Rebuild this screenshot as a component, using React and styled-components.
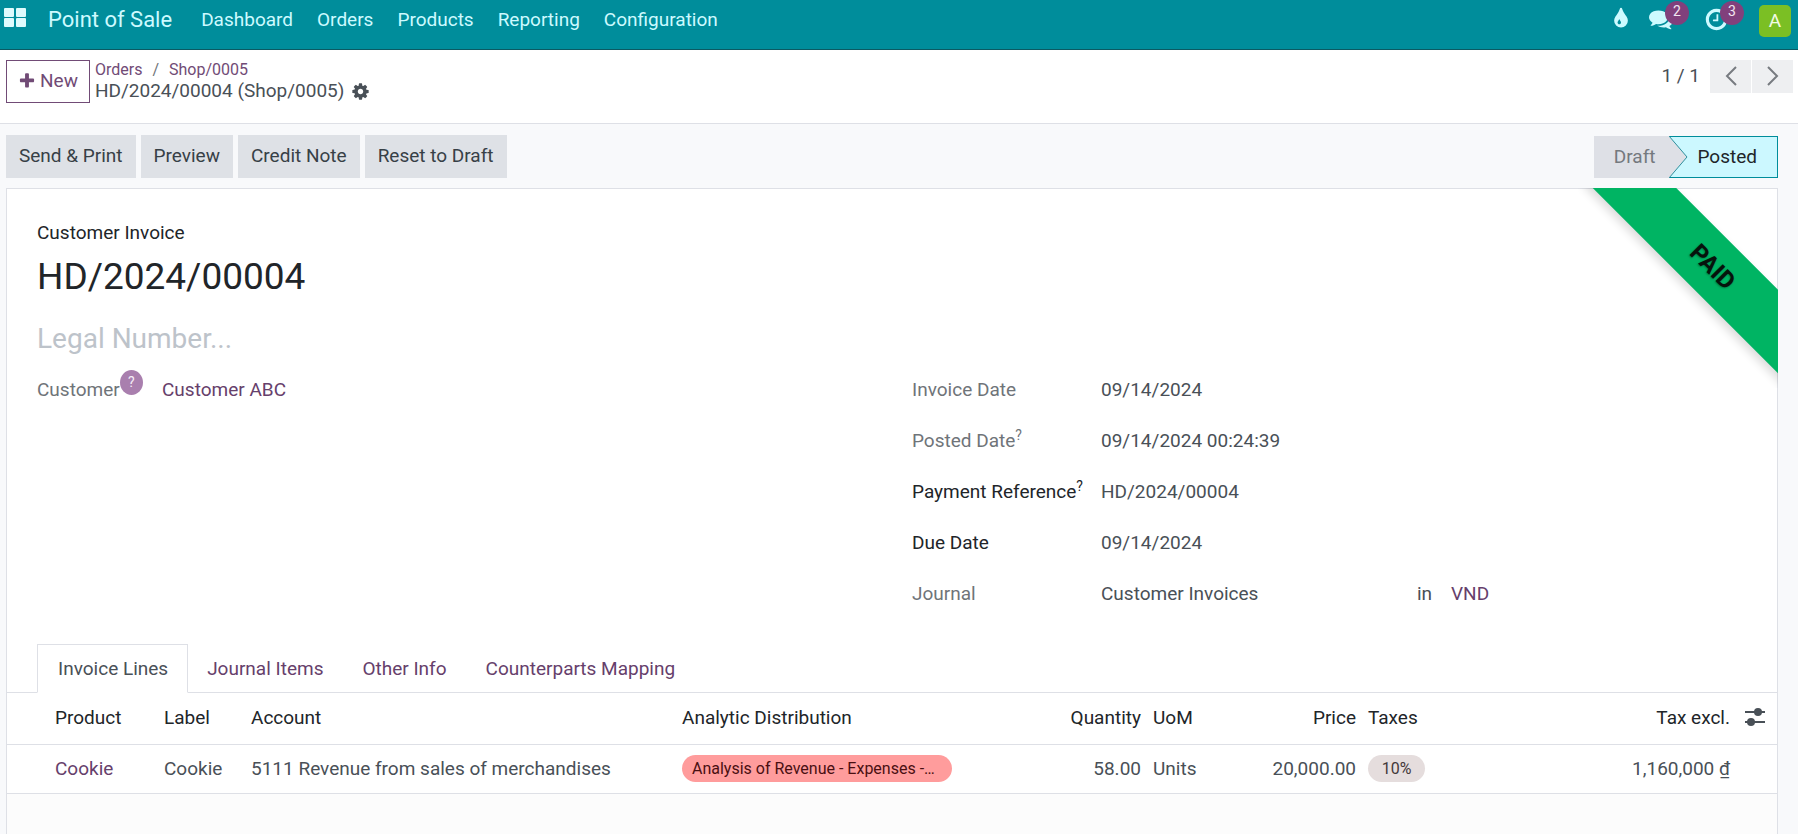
import React from "react";
import styled, { createGlobalStyle } from "styled-components";

const color = {
  teal: "#008d9b",
  tealDark: "#0b5a63",
  navText: "#cdfaff",
  plum: "#714b76",
  plumDark: "#66406b",
  line: "#dee0e6",
  text: "#495057",
  dark: "#212529",
  muted: "#6f7479",
};

const GlobalStyle = createGlobalStyle`
  *, *::before, *::after { box-sizing: border-box; }
  body {
    margin: 0;
    background: #f8f9fb;
    color: ${color.text};
    font-family: Roboto, "Liberation Sans", sans-serif;
    font-size: 19px;
    line-height: 27px;
  }
  html, body, #root { min-height: 100vh; }
  #root { display: flex; }
  button, input { font: inherit; color: inherit; }
  a { color: inherit; text-decoration: none; }
`;

const Page = styled.div`
  display: flex;
  flex-direction: column;
  flex: 1;
  min-width: 0;
`;

const NavBar = styled.header`
  display: flex;
  justify-content: space-between;
  height: 50px;
  padding: 0 7px 0 4px;
  background: ${color.teal};
  border-bottom: 1px solid ${color.tealDark};
  color: ${color.navText};
`;

const Menu = styled.nav`
  display: flex;
  align-items: center;
  gap: 24px;
  height: 39px;
`;

const AppsButton = styled.button`
  display: flex;
  padding: 0;
  margin: 0 -2px 4px 0;
  border: 0;
  background: none;
`;

const Brand = styled.a`
  margin-right: 5px;
  font-size: 22px;
`;

const MenuLink = styled.a``;

const Systray = styled.div`
  display: flex;
  align-items: center;
  height: 40px;
`;

const TrayButton = styled.button`
  position: relative;
  display: flex;
  padding: 0 0 2px;
  margin-right: ${(p) => p.$gap}px;
  border: 0;
  background: none;
`;

const Counter = styled.span`
  position: absolute;
  top: -6px;
  left: 16px;
  width: 24px;
  height: 24px;
  border-radius: 12px;
  background: #81407c;
  color: #f1e6f1;
  font-size: 14px;
  line-height: 20px;
  text-align: center;
`;

const Avatar = styled.button`
  width: 32px;
  height: 32px;
  padding: 0;
  margin-top: 2px;
  border: 0;
  border-radius: 5px;
  background: #7bbf24;
  color: #f2fbe6;
  line-height: 32px;
`;

const ControlPanel = styled.div`
  display: flex;
  justify-content: space-between;
  align-items: flex-start;
  height: 74px;
  padding: 10px 5px 0 6px;
  background: #fff;
  border-bottom: 1px solid ${color.line};
`;

const Cluster = styled.div`
  display: flex;
  align-items: ${(p) => p.$align || "center"};
  gap: ${(p) => p.$gap}px;
`;

const NewButton = styled.button`
  display: flex;
  align-items: center;
  gap: 4px;
  height: 43px;
  padding: 0 11px 2px;
  border: 1px solid ${color.plum};
  background: #fff;
  color: ${color.plum};
`;

const Crumbs = styled.nav`
  display: flex;
  gap: 10px;
  color: ${color.plum};
  font-size: 16px;
  line-height: 20px;
`;

const Slash = styled.span`
  color: #6f7479;
`;

const Current = styled.div`
  display: flex;
  align-items: center;
  gap: 7px;
  line-height: 22px;
`;

const IconButton = styled.button`
  display: inline-flex;
  padding: 0;
  border: 0;
  background: none;
  vertical-align: middle;
`;

const PageCount = styled.span`
  padding-bottom: 2px;
`;

const PageButtons = styled.div`
  display: flex;
  gap: 1px;
`;

const PageButton = styled.button`
  display: flex;
  align-items: center;
  justify-content: center;
  width: 41px;
  height: 33px;
  padding: 0 0 2px;
  border: 0;
  background: #eeeff1;
`;

const StatusRow = styled.div`
  display: flex;
  justify-content: space-between;
  padding: 11px 20px 10px 6px;
`;

const ActionButton = styled.button`
  height: 43px;
  padding: 0 13px 2px;
  border: 0;
  background: #dee1e6;
  color: #374046;
`;

const StatusBar = styled.div`
  display: flex;
  height: 42px;
  margin-top: 1px;
`;

const Stage = styled.button`
  position: relative;
  padding: ${(p) => (p.$active ? "0 20px 2px 28px" : "0 14px 2px 20px")};
  border: solid ${color.teal};
  border-width: ${(p) => (p.$active ? "1px 1px 1px 0" : "0")};
  background: ${(p) => (p.$active ? "#ccf8ff" : "#dee0e6")};
  color: ${(p) => (p.$active ? color.dark : "#74797e")};
`;

const StageTip = styled.svg`
  position: absolute;
  top: -1px;
  left: 0;
`;

const Sheet = styled.main`
  position: relative;
  flex: 1;
  margin: 0 20px 0 6px;
  border: 1px solid ${color.line};
  border-bottom: 0;
  background: #fff;
  display: flex;
  flex-direction: column;
`;

const RibbonClip = styled.div`
  position: absolute;
  top: -1px;
  right: -1px;
  width: 200px;
  height: 200px;
  overflow: hidden;
`;

const Ribbon = styled.div`
  position: absolute;
  top: 49px;
  right: -85px;
  width: 300px;
  height: 59px;
  transform: rotate(45deg);
  background: #00b463;
  box-shadow: 0 5px 10px rgba(0, 0, 0, 0.14);
  color: #06130c;
  font-size: 24px;
  font-weight: 700;
  line-height: 60px;
  text-align: center;
  text-shadow: 0 1px 2px rgba(0, 0, 0, 0.35);
`;

const SheetBody = styled.div`
  padding: 30px 30px 0;
`;

const DocType = styled.div`
  color: ${color.dark};
`;

const DocNumber = styled.h1`
  margin: 9px 0 0;
  color: ${color.dark};
  font-size: 37px;
  font-weight: 400;
  line-height: 44px;
`;

const LegalInput = styled.input`
  display: block;
  width: 400px;
  height: 36px;
  margin: 21px 0 13px;
  padding: 0;
  border: 0;
  background: none;
  font-size: 28px;
  &::placeholder { color: #bdc3ca; opacity: 1; }
`;

const Groups = styled.div`
  display: grid;
  grid-template-columns: 1fr 1fr;
  gap: 40px;
`;

const Fields = styled.dl`
  display: grid;
  grid-template-columns: ${(p) => p.$label}px 1fr;
  grid-auto-rows: 27px;
  row-gap: 24px;
  align-content: start;
  margin: 7px 0 0;
`;

const FieldLabel = styled.dt`
  position: relative;
  display: flex;
  color: ${(p) => (p.$strong ? color.dark : color.muted)};
`;

const FieldValue = styled.dd`
  display: flex;
  margin: 0;
`;

const Hint = styled.sup`
  font-size: 14px;
  line-height: 16px;
`;

const HelpDot = styled.button`
  width: 23px;
  height: 25px;
  margin-top: -6px;
  padding: 0;
  border: 0;
  border-radius: 50%;
  background: #a97fae;
  color: #f6eef7;
  font-size: 14px;
  line-height: 25px;
`;

const PlumLink = styled.a`
  color: ${color.plumDark};
`;

const JournalName = styled.span`
  width: 316px;
`;

const InWord = styled.span`
  width: 34px;
`;

const Tabs = styled.div`
  display: flex;
  margin-top: 37px;
  padding-left: 30px;
  border-bottom: 1px solid ${color.line};
`;

const Tab = styled.button`
  height: 49px;
  margin-bottom: -1px;
  padding: ${(p) => (p.$active ? "0 19px 0 20px" : "0 19px 0 18px")};
  border: 1px solid ${(p) => (p.$active ? color.line : "transparent")};
  border-bottom-color: ${(p) => (p.$active ? "#fff" : "transparent")};
  background: ${(p) => (p.$active ? "#fff" : "none")};
  color: ${(p) => (p.$active ? color.text : color.plumDark)};
`;

const Lines = styled.table`
  width: 100%;
  table-layout: fixed;
  border-collapse: separate;
  border-spacing: 0;
`;

const Col = styled.col`
  width: ${(p) => (p.$w ? `${p.$w}px` : "auto")};
`;

const HeadCell = styled.th`
  height: 52px;
  padding: 0 6px 2px;
  border-bottom: 1px solid ${color.line};
  color: ${color.dark};
  font-weight: 400;
  text-align: ${(p) => (p.$right ? "right" : "left")};
  white-space: nowrap;
  &:first-child { padding-left: 48px; }
  &:last-child { padding: 0 0 5px 9px; }
`;

const Cell = styled.td`
  height: 49px;
  padding: 0 6px 1px;
  border-bottom: 1px solid ${color.line};
  text-align: ${(p) => (p.$right ? "right" : "left")};
  white-space: nowrap;
  &:first-child { padding-left: 48px; }
`;

const Tag = styled.span`
  display: block;
  width: ${(p) => p.$w}px;
  height: 27px;
  border-radius: 14px;
  padding: 0 10px;
  background: ${(p) => (p.$red ? "#ff9c9c" : "#e5dddd")};
  color: ${(p) => (p.$red ? "#4a0f12" : "#43383a")};
  font-size: 16px;
  text-align: ${(p) => (p.$red ? "left" : "center")};
`;

const SheetRest = styled.div`
  flex: 1;
  min-height: 40px;
  background: #fcfcfc;
`;

const glyphs = {
  plus: "M1600 736v192q0 40-28 68t-68 28h-416v416q0 40-28 68t-68 28h-192q-40 0-68-28t-28-68v-416h-416q-40 0-68-28t-28-68v-192q0-40 28-68t68-28h416v-416q0-40 28-68t68-28h192q40 0 68 28t28 68v416h416q40 0 68 28t28 68z",
  cog: "M1152 896q0-106-75-181t-181-75-181 75-75 181 75 181 181 75 181-75 75-181zm512-109v222q0 12-8 23t-20 13l-185 28q-19 54-39 91 35 50 107 138 10 12 10 25t-9 23q-27 37-99 108t-94 71q-12 0-26-9l-138-108q-44 23-91 38-16 136-29 186-7 28-36 28h-222q-14 0-24.5-8.5t-11.5-21.5l-28-184q-49-16-90-37l-141 107q-10 9-25 9-14 0-25-11-126-114-165-168-7-10-7-23 0-12 8-23 15-21 51-66.5t54-70.5q-27-50-41-99l-183-27q-13-2-21-12.5t-8-23.5v-222q0-12 8-23t19-13l186-28q14-46 39-92-40-57-107-138-10-12-10-24 0-10 9-23 26-36 98.5-107.5t94.5-71.5q13 0 26 10l138 107q44-23 91-38 16-136 29-186 7-28 36-28h222q14 0 24.5 8.5t11.5 21.5l28 184q49 16 90 37l142-107q9-9 24-9 13 0 25 10 129 119 165 170 7 8 7 22 0 12-8 23-15 21-51 66.5t-54 70.5q26 50 41 98l183 28q13 2 21 12.5t8 23.5z",
  tint: "M896 1152q0-36-20-69-1-1-15.5-22.5t-25.5-38-25-44-21-50.5q-4-16-21-16t-21 16q-7 23-21 50.5t-25 44-25.5 38-15.5 22.5q-20 33-20 69 0 53 37.5 90.5t90.5 37.5 90.5-37.5 37.5-90.5zm512-128q0 212-150 362t-362 150-362-150-150-362q0-145 81-275 6-9 62.5-90.5t101-151 99.5-178 83-201.5q9-30 34-47t51-17 51.5 17 33.5 47q28 93 83 201.5t99.5 178 101 151 62.5 90.5q81 127 81 275z",
  comments: "M1408 768q0 139-94 257t-256.5 186.5-353.5 68.5q-86 0-176-16-124 88-278 128-36 9-86 16h-3q-11 0-20.5-8t-11.5-21q-1-3-1-6.5t.5-6.5 2-6l2.5-5 3.5-5.5 4-5 4.5-5 4-4.5q5-6 23-25t26-29.5 22.5-29 25-38.5 20.5-44q-124-72-195-177t-71-224q0-139 94-257t256.5-186.5 353.5-68.5 353.5 68.5 256.5 186.5 94 257zm384 256q0 120-71 224.5t-195 176.5q10 24 20.5 44t25 38.5 22.5 29 26 29.5 23 25q1 1 4 4.5t4.5 5 4 5 3.5 5.5l2.5 5 2 6 .5 6.5-1 6.5q-3 14-13 22t-22 7q-50-7-86-16-154-40-278-128-90 16-176 16-271 0-472-132 58 4 88 4 161 0 309-45t264-129q125-92 192-212t67-254q0-77-23-152 129 71 204 178t75 230z",
  clock: "M1024 544v448q0 14-9 23t-23 9h-320q-14 0-23-9t-9-23v-64q0-14 9-23t23-9h224v-352q0-14 9-23t23-9h64q14 0 23 9t9 23zm416 352q0-148-73-273t-198-198-273-73-273 73-198 198-73 273 73 273 198 198 273 73 273-73 198-198 73-273zm224 0q0 209-103 385.5t-279.5 279.5-385.5 103-385.5-103-279.5-279.5-103-385.5 103-385.5 279.5-279.5 385.5-103 385.5 103 279.5 279.5 103 385.5z",
};

const Glyph = ({ name, size, fill = "currentColor" }) => (
  <svg width={size} height={size} viewBox="0 0 1792 1792" fill={fill} aria-hidden="true">
    <path d={glyphs[name]} />
  </svg>
);

const AppsIcon = () => (
  <svg width="22" height="19" viewBox="0 0 22 19" fill="#dffbfd" aria-hidden="true">
    <rect x="0" y="0" width="10" height="9" rx="1" />
    <rect x="12" y="0" width="10" height="9" rx="1" />
    <rect x="0" y="10" width="10" height="9" rx="1" />
    <rect x="12" y="10" width="10" height="9" rx="1" />
  </svg>
);

const Chevron = ({ d }) => (
  <svg width="12" height="20" viewBox="0 0 12 20" fill="none" stroke="#777b80" strokeWidth="2" aria-hidden="true">
    <path d={d} />
  </svg>
);

const SlidersIcon = () => (
  <svg width="20" height="18" viewBox="0 0 20 18" fill={color.text} aria-hidden="true">
    <rect x="0" y="3" width="20" height="2" />
    <circle cx="13" cy="4" r="4" />
    <rect x="0" y="13" width="20" height="2" />
    <circle cx="6" cy="14" r="4" />
  </svg>
);

const menu = ["Dashboard", "Orders", "Products", "Reporting", "Configuration"];
const actions = ["Send & Print", "Preview", "Credit Note", "Reset to Draft"];
const tabs = ["Invoice Lines", "Journal Items", "Other Info", "Counterparts Mapping"];

const fields = [
  { label: "Invoice Date", value: "09/14/2024" },
  { label: "Posted Date", hint: true, value: "09/14/2024 00:24:39" },
  { label: "Payment Reference", hint: true, strong: true, value: "HD/2024/00004" },
  { label: "Due Date", strong: true, value: "09/14/2024" },
];

const columns = [
  { name: "Product", width: 151 },
  { name: "Label", width: 87 },
  { name: "Account" },
  { name: "Analytic Distribution", width: 325 },
  { name: "Quantity", width: 146, right: true },
  { name: "UoM", width: 100 },
  { name: "Price", width: 115, right: true },
  { name: "Taxes", width: 140 },
  { name: "Tax excl.", width: 234, right: true },
];

export default function App() {
  return (
    <>
      <GlobalStyle />
      <Page>
        <NavBar>
          <Menu>
            <AppsButton aria-label="Apps"><AppsIcon /></AppsButton>
            <Brand href="#">Point of Sale</Brand>
            {menu.map((m) => <MenuLink key={m} href="#">{m}</MenuLink>)}
          </Menu>
          <Systray>
            <TrayButton $gap={16} aria-label="Theme"><Glyph name="tint" size={24} /></TrayButton>
            <TrayButton $gap={31} aria-label="Messages">
              <Glyph name="comments" size={24} /><Counter>2</Counter>
            </TrayButton>
            <TrayButton $gap={30} aria-label="Activities">
              <Glyph name="clock" size={25} /><Counter>3</Counter>
            </TrayButton>
            <Avatar>A</Avatar>
          </Systray>
        </NavBar>

        <ControlPanel>
          <Cluster $gap={5} $align="flex-start">
            <NewButton><Glyph name="plus" size={18} />New</NewButton>
            <div>
              <Crumbs>
                <a href="#">Orders</a><Slash>/</Slash><a href="#">Shop/0005</a>
              </Crumbs>
              <Current>
                HD/2024/00004 (Shop/0005)
                <IconButton aria-label="Actions"><Glyph name="cog" size={19} /></IconButton>
              </Current>
            </div>
          </Cluster>
          <Cluster $gap={10}>
            <PageCount>1 / 1</PageCount>
            <PageButtons>
              <PageButton aria-label="Previous"><Chevron d="M11 1L2 10l9 9" /></PageButton>
              <PageButton aria-label="Next"><Chevron d="M1 1l9 9-9 9" /></PageButton>
            </PageButtons>
          </Cluster>
        </ControlPanel>

        <StatusRow>
          <Cluster $gap={5}>
            {actions.map((a) => <ActionButton key={a}>{a}</ActionButton>)}
          </Cluster>
          <StatusBar>
            <Stage>Draft</Stage>
            <Stage $active>
              <StageTip width="19" height="42" viewBox="0 0 19 42" aria-hidden="true">
                <path d="M0 0L18 21L0 42z" fill="#dee0e6" />
                <path d="M0 0L18 21L0 42" fill="none" stroke="#2f8f9c" />
              </StageTip>
              Posted
            </Stage>
          </StatusBar>
        </StatusRow>

        <Sheet>
          <RibbonClip><Ribbon>PAID</Ribbon></RibbonClip>
          <SheetBody>
            <DocType>Customer Invoice</DocType>
            <DocNumber>HD/2024/00004</DocNumber>
            <LegalInput placeholder="Legal Number..." aria-label="Legal Number" />
            <Groups>
              <Fields $label={125}>
                <FieldLabel>Customer<HelpDot>?</HelpDot></FieldLabel>
                <FieldValue><PlumLink href="#">Customer ABC</PlumLink></FieldValue>
              </Fields>
              <Fields $label={189}>
                {fields.map((f) => (
                  <React.Fragment key={f.label}>
                    <FieldLabel $strong={f.strong}>{f.label}{f.hint && <Hint>?</Hint>}</FieldLabel>
                    <FieldValue>{f.value}</FieldValue>
                  </React.Fragment>
                ))}
                <FieldLabel>Journal</FieldLabel>
                <FieldValue>
                  <JournalName>Customer Invoices</JournalName>
                  <InWord>in</InWord>
                  <PlumLink href="#">VND</PlumLink>
                </FieldValue>
              </Fields>
            </Groups>
          </SheetBody>

          <Tabs role="tablist">
            {tabs.map((t, i) => (
              <Tab key={t} role="tab" aria-selected={i === 0} $active={i === 0}>{t}</Tab>
            ))}
          </Tabs>

          <Lines>
            <colgroup>
              {columns.map((c) => <Col key={c.name} $w={c.width} />)}
              <Col $w={41} />
            </colgroup>
            <thead>
              <tr>
                {columns.map((c) => <HeadCell key={c.name} $right={c.right}>{c.name}</HeadCell>)}
                <HeadCell><IconButton aria-label="Optional columns"><SlidersIcon /></IconButton></HeadCell>
              </tr>
            </thead>
            <tbody>
              <tr>
                <Cell><PlumLink href="#">Cookie</PlumLink></Cell>
                <Cell>Cookie</Cell>
                <Cell>5111 Revenue from sales of merchandises</Cell>
                <Cell><Tag $red $w={270}>Analysis of Revenue - Expenses -…</Tag></Cell>
                <Cell $right>58.00</Cell>
                <Cell>Units</Cell>
                <Cell $right>20,000.00</Cell>
                <Cell><Tag $w={57}>10%</Tag></Cell>
                <Cell $right>1,160,000 ₫</Cell>
                <Cell />
              </tr>
            </tbody>
          </Lines>
          <SheetRest />
        </Sheet>
      </Page>
    </>
  );
}
